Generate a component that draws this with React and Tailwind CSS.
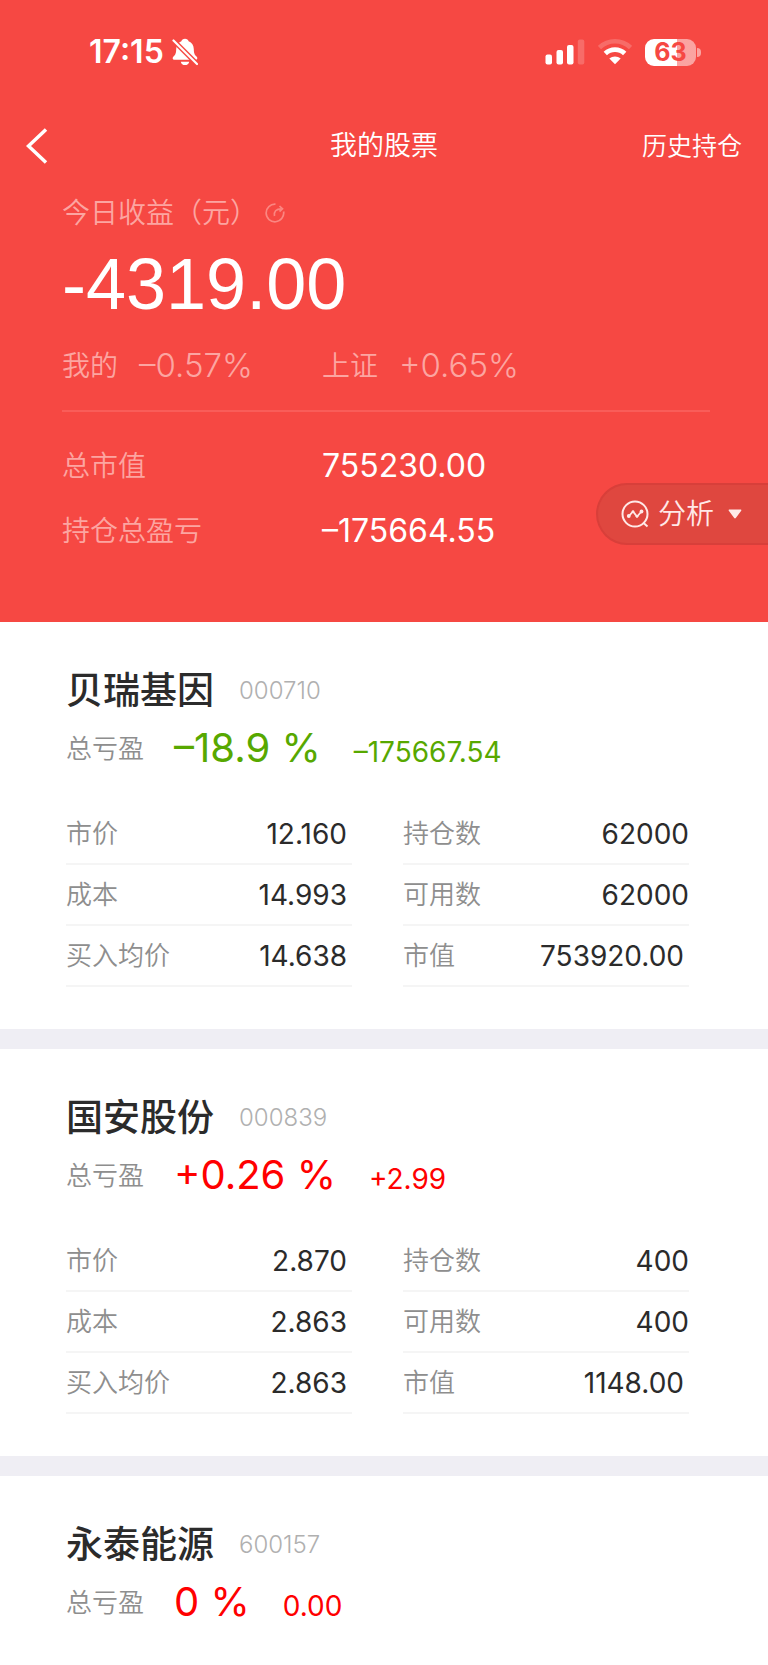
import React from "react";

const stocks = [
  {
    name: "贝瑞基因",
    code: "000710",
    percent: "–18.9 %",
    profit: "–175667.54",
    down: true,
    details: {
      price: "12.160",
      cost: "14.993",
      average: "14.638",
      holding: "62000",
      available: "62000",
      value: "753920.00",
    },
  },
  {
    name: "国安股份",
    code: "000839",
    percent: "+0.26 %",
    profit: "+2.99",
    details: {
      price: "2.870",
      cost: "2.863",
      average: "2.863",
      holding: "400",
      available: "400",
      value: "1148.00",
    },
  },
  { name: "永泰能源", code: "600157", percent: "0 %", profit: "0.00" },
];

const StatusBar = () => (
  <div className="flex h-[104px] items-center justify-between pl-[89px] pr-[67px]">
    <div className="flex items-center gap-2">
      <span className="text-[32px] font-semibold leading-9">17:15</span>
      <svg className="h-[28px] w-[26px]" viewBox="0 0 26 28" fill="#fff">
        <path d="M13 .8c-1.900 0-3.300 1.200-3.600 2.500C6 4.600 4.300 7.600 4.200 11c-.1 4.200-.6 5.600-2.700 7.600C.200 19.900.400 21.800 2.300 21.800h21.400c1.900 0 2.100-1.900.8-3.200-2.100-2-2.600-3.400-2.700-7.600-.1-3.400-1.800-6.400-5.200-7.700C16.300 2 14.900.8 13 .8z" />
        <path d="M8.800 23.700h8.400c-.4 2.100-2 3.400-4.200 3.400s-3.800-1.300-4.200-3.400z" />
        <path d="M0 1l26 26" stroke="#F64843" strokeWidth="5" />
        <path d="M1.500 2.500l23.500 23.500" stroke="#fff" strokeWidth="2.200" strokeLinecap="round" />
      </svg>
    </div>
    <div className="flex items-center gap-[13px]">
      <svg className="h-[26px] w-[40px]" viewBox="0 0 40 26" fill="#fff">
        <rect x="0.500" y="15.500" width="6.500" height="10" rx="2" />
        <rect x="11.500" y="11" width="6.500" height="14.500" rx="2" />
        <rect x="22" y="6" width="6.500" height="19.500" rx="2" />
        <rect x="32.800" y="0.500" width="6.500" height="25" rx="2" opacity="0.2" />
      </svg>
      <svg className="h-[26px] w-[34px]" viewBox="0 0 34 26" fill="none" stroke="#fff">
        <path d="M1.500 8.500a22.500 22.500 0 0 1 31 0" strokeWidth="4.500" opacity="0.2" />
        <path d="M7.300 14.500a14 14 0 0 1 19.400 0" strokeWidth="4.800" />
        <path d="M11.300 19.600c3.200-2.900 8.200-2.900 11.400 0L17 25.300z" fill="#fff" stroke="none" />
      </svg>
      <div className="flex items-center gap-px">
        <span className="flex h-[27px] w-[51px] items-center justify-center rounded-[9px] bg-linear-to-r from-white from-63% to-white/50 to-63% text-[25px] font-bold leading-none text-[#F64843]">
          63
        </span>
        <span className="h-[9px] w-[4px] rounded-r-full bg-white/50" />
      </div>
    </div>
  </div>
);

const Summary = () => (
  <header className="bg-[#F64843] pb-[59px] text-white">
    <StatusBar />

    <nav className="grid h-[84px] grid-cols-3 items-center px-[26px]">
      <button type="button" aria-label="返回" className="justify-self-start">
        <svg className="h-[36px] w-[22px]" viewBox="0 0 22 36" fill="none" stroke="#fff" strokeWidth="3.500">
          <path d="M20 1.500L2.500 18l17.500 16.500" />
        </svg>
      </button>
      <h1 className="text-center text-[27px] font-[350] leading-9">我的股票</h1>
      <a href="#history" className="justify-self-end text-[25px] font-[350] leading-9">
        历史持仓
      </a>
    </nav>

    <div className="pl-[62px]">
      <div className="flex h-[48px] items-center gap-[7px] pt-[2px] text-[28px] font-[350] text-[#FCA5A1]">
        <span>今日收益（元）</span>
        <button type="button" aria-label="刷新">
          <svg className="h-[20px] w-[20px]" viewBox="0 0 20 20" fill="none" stroke="#FB8681" strokeWidth="1.700">
            <path d="M10.500 1.200A8.800 8.800 0 1 0 18.600 8.500" />
            <path d="M9.500 13C8.600 8.500 11 5.800 16.500 5.800" />
            <path d="M14.500 3l3 2.800-3 2.700" />
          </svg>
        </button>
      </div>

      <p className="font-['Liberation_Sans',sans-serif] text-[72px] leading-[96px]">-4319.00</p>

      <div className="mr-[58px] flex h-[80px] items-center border-b-2 border-[#F95D59] pb-[10px] font-[350] text-[#FCA5A1]">
        <div className="flex w-[260px] items-center gap-[21px]">
          <span className="text-[28px]">我的</span>
          <span className="text-[33px]">–0.57%</span>
        </div>
        <div className="flex items-center gap-[21px]">
          <span className="text-[28px]">上证</span>
          <span className="text-[33px]">+0.65%</span>
        </div>
      </div>

      <div className="mt-[21px] flex items-end justify-between">
        <dl className="grid grid-cols-[260px_auto] items-center">
          <dt className="text-[28px] font-[350] text-[#FCA5A1]">总市值</dt>
          <dd className="text-[32px] leading-[65px]">755230.00</dd>
          <dt className="text-[28px] font-[350] text-[#FCA5A1]">持仓总盈亏</dt>
          <dd className="text-[32px] leading-[65px]">–175664.55</dd>
        </dl>
        <button
          type="button"
          className="mb-[18px] flex h-[62px] w-[172px] items-center rounded-l-full border-2 border-r-0 border-[#D83F3A] bg-[#DF473F] pl-[23px] text-[28px] font-[350] text-[#FFE9E8]"
        >
          <svg className="mr-[9px] h-[28px] w-[28px]" viewBox="0 0 28 28" fill="none" stroke="currentColor" strokeWidth="2">
            <circle cx="14" cy="14" r="12.500" />
            <path d="M22 22.500l4.500 4" />
            <path d="M8 16l4-4.500 4 5 4.500-5" strokeWidth="1.800" />
            <g fill="currentColor" stroke="none">
              <circle cx="7.800" cy="16" r="1.900" />
              <circle cx="12" cy="11.800" r="1.400" />
              <circle cx="16" cy="16.300" r="1.400" />
              <circle cx="20.500" cy="11.500" r="1.900" />
            </g>
          </svg>
          分析
          <svg className="ml-[14px] h-[10px] w-[14px]" viewBox="0 0 14 10" fill="currentColor">
            <path d="M1.500 0.500h11c.8 0 1.200.7.7 1.300L7.800 9c-.4.600-1.200.600-1.600 0L.8 1.800C.3 1.200.700.500 1.500.500z" />
          </svg>
        </button>
      </div>
    </div>
  </header>
);

const Row = ({ label, value, inset }) => (
  <div className="flex h-[61px] items-center justify-between border-b-2 border-[#F5F5F5]">
    <dt className="text-[26px] font-[350] text-[#8E8E8E]">{label}</dt>
    <dd className={`text-[28px] text-[#2B2B2B] ${inset ? "pr-[5px]" : ""}`}>{value}</dd>
  </div>
);

const StockCard = ({ stock }) => {
  const { name, code, percent, profit, down, details } = stock;

  return (
    <section className="bg-white pl-[66px] pr-[79px] pt-[47px]">
      <div className="flex h-[44px] items-center gap-[25px]">
        <h2 className="text-[37px] font-medium text-[#2B2B2B]">{name}</h2>
        <span className="text-[24px] font-light text-[#B0B0B0]">{code}</span>
      </div>
      <div className="flex h-[70px] items-center">
        <span className="text-[26px] font-[350] text-[#8E8E8E]">总亏盈</span>
        <div
          className={`flex items-baseline gap-[33px] pl-[30px] ${
            down ? "text-[#57A800]" : "text-[#FF0000]"
          }`}
        >
          <span className="text-[40px]">{percent}</span>
          <span className="text-[28px]">{profit}</span>
        </div>
      </div>

      {details && (
        <dl className="mt-[21px] grid grid-cols-2 gap-x-[51px] pb-[42px]">
          <div>
            <Row label="市价" value={details.price} inset />
            <Row label="成本" value={details.cost} inset />
            <Row label="买入均价" value={details.average} inset />
          </div>
          <div>
            <Row label="持仓数" value={details.holding} />
            <Row label="可用数" value={details.available} />
            <Row label="市值" value={details.value} inset />
          </div>
        </dl>
      )}
    </section>
  );
};

const App = () => {
  return (
    <div className="min-h-screen bg-white font-[Inter,'Noto_Sans_CJK_SC',sans-serif]">
      <Summary />
      <main className="flex flex-col gap-[20px] bg-[#EFEEF4]">
        {stocks.map((stock) => (
          <StockCard key={stock.code} stock={stock} />
        ))}
      </main>
    </div>
  );
};

export default App;
